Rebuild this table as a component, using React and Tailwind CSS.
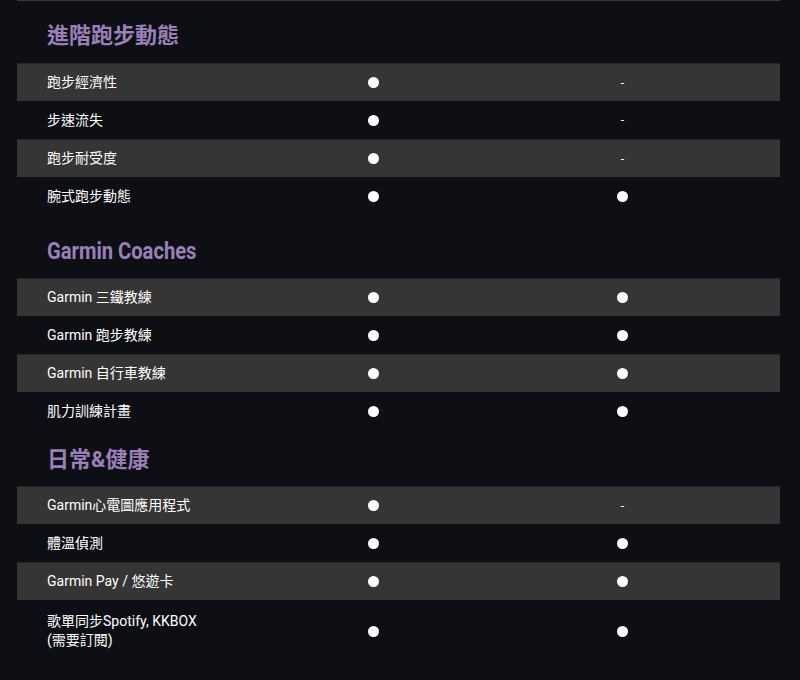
import React from "react";

const sections = [
  {
    title: "進階跑步動態",
    latin: false,
    h: "h-[62px] pb-[16px]",
    rows: [
      ["跑步經濟性", true, false],
      ["步速流失", true, false],
      ["跑步耐受度", true, false],
      ["腕式跑步動態", true, true],
    ],
  },
  {
    title: "Garmin Coaches",
    latin: true,
    h: "h-[63px] pb-[15px]",
    rows: [
      ["Garmin 三鐵教練", true, true],
      ["Garmin 跑步教練", true, true],
      ["Garmin 自行車教練", true, true],
      ["肌力訓練計畫", true, true],
    ],
  },
  {
    title: "日常&健康",
    latin: false,
    h: "h-[56px] pb-[15px]",
    rows: [
      ["Garmin心電圖應用程式", true, false],
      ["體溫偵測", true, true],
      ["Garmin Pay / 悠遊卡", true, true],
      ["歌單同步Spotify, KKBOX\n(需要訂閱)", true, true],
    ],
  },
];

function Cell({ on }) {
  return (
    <div className="flex items-center justify-center">
      {on ? (
        <span className="block w-[11px] h-[11px] rounded-full bg-white" />
      ) : (
        <span className="text-[12px] leading-none text-white">-</span>
      )}
    </div>
  );
}

export default function App() {
  return (
    <div
      className="w-[800px] h-[680px] bg-[#0e0f14] overflow-hidden"
      style={{ fontFamily: 'Roboto, "Noto Sans CJK TC", sans-serif' }}
    >
      <div className="ml-[17px] w-[763px] h-px bg-[#3a3a3a]" />
      {sections.map((s, si) => (
        <div key={si}>
          <div className={`flex items-end pl-[47px] ${s.h}`}>
            {s.latin ? (
              <span
                className="inline-block origin-left scale-x-[0.84] text-[24px] leading-[24px] font-bold text-[#9a80b8] whitespace-nowrap"
                style={{ fontFamily: 'Roboto, sans-serif' }}
              >
                {s.title}
              </span>
            ) : (
              <span className="text-[22px] leading-[22px] font-bold text-[#9a80b8]">
                {s.title}
              </span>
            )}
          </div>
          {s.rows.map((r, ri) => {
            const multi = r[0].includes("\n");
            return (
              <div
                key={ri}
                className={`ml-[17px] w-[763px] grid grid-cols-[232px_249px_249px_1fr] ${
                  ri % 2 === 0 ? "bg-[#353535] border-t border-[#262626]" : ""
                } ${multi ? "py-[12px]" : "h-[38px]"}`}
              >
                <div className="pl-[30px] flex items-center text-[14px] text-white whitespace-pre-line leading-[19px]">
                  {r[0]}
                </div>
                <Cell on={r[1]} />
                <Cell on={r[2]} />
                <div />
              </div>
            );
          })}
        </div>
      ))}
    </div>
  );
}
